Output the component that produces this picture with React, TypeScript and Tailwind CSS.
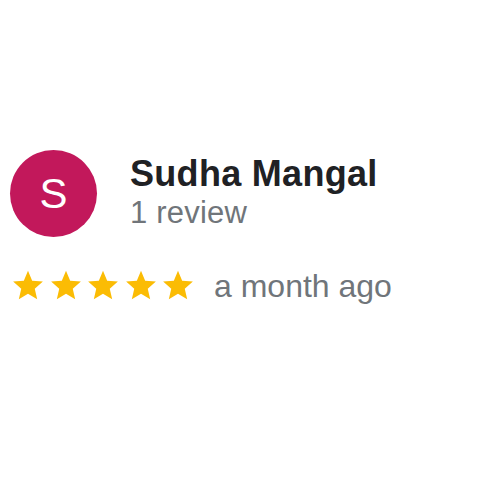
export default function App() {
  return (
    <div className="w-[500px] h-[500px] bg-white pt-[150px] pl-[10px]" style={{ fontFamily: '"Liberation Sans", Arial, sans-serif' }}>
      <div className="flex items-start gap-[33px]">
        <div className="w-[87px] h-[87px] rounded-full bg-[#c2185b] flex items-center justify-center shrink-0">
          <span className="text-white text-[42px] leading-none">S</span>
        </div>
        <div className="flex flex-col pt-[4px]">
          <span className="text-[36px] font-bold text-[#202124] leading-[40px] tracking-[0.3px]">Sudha Mangal</span>
          <span className="text-[31px] text-[#70757a] leading-[34px] mt-[2px] tracking-[0.2px]">1 review</span>
        </div>
      </div>
      <div className="flex items-center mt-[31px]">
        <div className="flex gap-[1.5px]">
          {[0, 1, 2, 3, 4].map((i) => (
            <svg key={i} width="36" height="34" viewBox="0 0 24 24">
              <path fill="#fbbc04" d="M12 2l2.94 6.96 7.56.64-5.73 4.97 1.71 7.43L12 18.1 5.52 22l1.71-7.43L1.5 9.6l7.56-.64z" />
            </svg>
          ))}
        </div>
        <span className="ml-[18px] mt-[2px] text-[32px] text-[#70757a] leading-none">a month ago</span>
      </div>
    </div>
  );
}
